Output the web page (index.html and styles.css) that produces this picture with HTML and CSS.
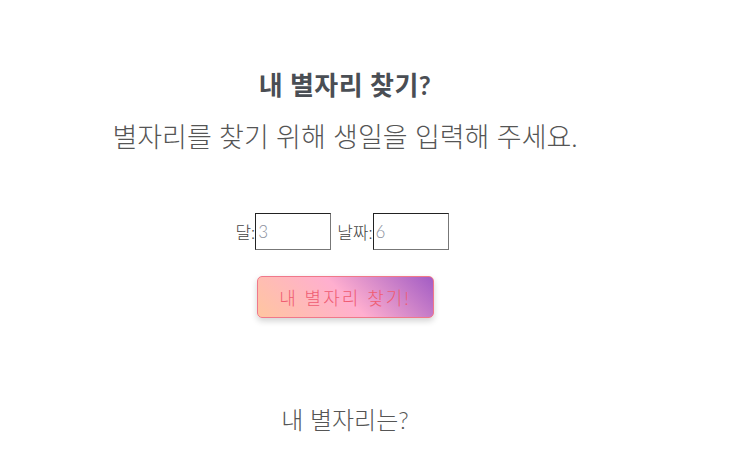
FILE: index.html
```html
<!DOCTYPE html>
<html lang="ko">
<head>
    <meta charset="UTF-8">
    <meta name="viewport" content="width=device-width, initial-scale=1.0">
    <title>내 별자리 찾기</title>
    <link rel="stylesheet" href="styles.css">
</head>
<body>
    <div class="container">
        <h2 class="title">내 별자리 찾기?</h2>
        <p class="desc">별자리를 찾기 위해 생일을 입력해 주세요.</p>

        <div class="form">
            <label for="month">달:</label><input type="text" id="month" value="3">
            <label for="day">날짜:</label><input type="text" id="day" value="6">
        </div>

        <button class="find-btn">내 별자리 찾기!</button>

        <p class="result">내 별자리는?</p>
    </div>
</body>
</html>
```

FILE: styles.css
```css
body {
    margin: 0;
    background-color: #fff;
    font-family: Lato, 'Noto Sans CJK KR', sans-serif;
    color: #555;
}

.container {
    width: 690px;
    display: flex;
    flex-direction: column;
    align-items: center;
    padding-top: 66px;
}

.title {
    margin: 0;
    font-size: 26px;
    font-weight: bold;
    color: #4a4e54;
    line-height: 38px;
    letter-spacing: 0.5px;
}

.desc {
    margin: 14px 0 0;
    font-size: 27px;
    font-weight: 300;
    line-height: 38px;
}

/* Birthday input */
.form {
    margin-top: 57px;
    display: flex;
    align-items: center;
    font-size: 17px;
    font-weight: 300;
    color: #444;
}

.form input {
    width: 76px;
    height: 37px;
    box-sizing: border-box;
    border: 1px solid #777;
    border-top-color: #222;
    border-left-color: #222;
    padding: 0 2px;
    font-family: inherit;
    font-size: 17px;
    font-weight: 300;
    color: #8a8f9c;
    margin-right: 6px;
    outline: none;
}

.find-btn {
    margin-top: 26px;
    width: 177px;
    height: 42px;
    border: 1px solid #f0788a;
    border-radius: 5px;
    background: linear-gradient(45deg, #ffc6a0 0%, #ffafcf 50%, #a25cc4 100%);
    color: #ef5d72;
    font-family: inherit;
    font-size: 18px;
    font-weight: 300;
    letter-spacing: 2px;
    box-shadow: 0 3px 6px rgba(0, 0, 0, 0.18);
    cursor: pointer;
}

.result {
    margin: 86px 0 0;
    font-size: 24px;
    font-weight: 300;
    line-height: 32px;
}
```
